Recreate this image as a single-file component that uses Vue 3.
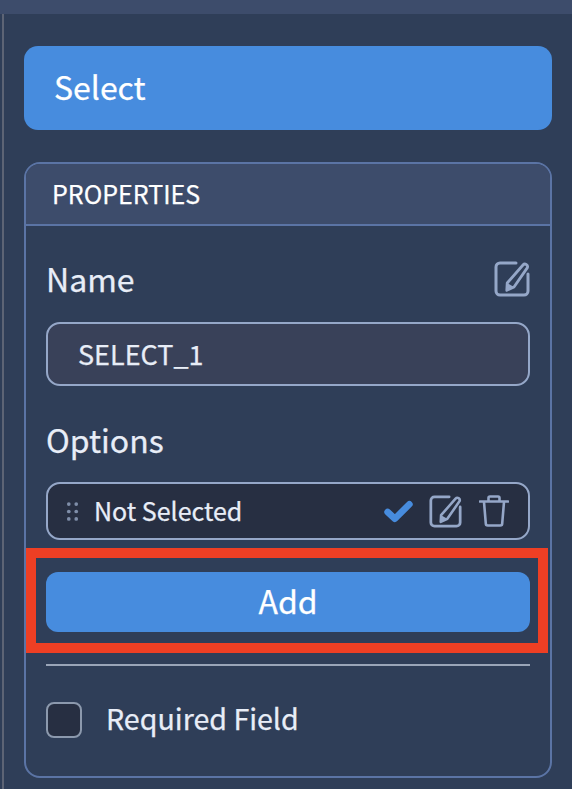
<script setup>
const fieldName = 'SELECT_1'
</script>

<template>
  <div class="page">
    <div class="topbar"></div>
    <div class="body">
      <aside class="rail"></aside>
      <main class="content">
        <div class="banner">Select</div>
        <section class="panel">
          <header class="panel-head">PROPERTIES</header>
          <div class="panel-body">
            <div class="name-row">
              <span class="label">Name</span>
              <svg class="edit edit-lg" viewBox="0 0 36 36" fill="none">
                <path d="M22 2H6a4 4 0 0 0-4 4v24a4 4 0 0 0 4 4h24a4 4 0 0 0 4-4V13" stroke="currentColor" stroke-width="3" stroke-linecap="round"/>
                <path d="M29 4a2.600 2.600 0 0 1 4.400 2.600L20 26l-7.200 3.300.4-7.300z" stroke="currentColor" stroke-width="2.800" stroke-linejoin="round"/>
                <path d="M13.200 22l6.800 4-7.200 3.300z" fill="currentColor"/>
              </svg>
            </div>
            <div class="input">{{ fieldName }}</div>
            <div class="label options-label">Options</div>
            <div class="option">
              <svg class="grip" viewBox="0 0 14 22" fill="currentColor">
                <circle cx="3" cy="3" r="2"/><circle cx="11" cy="3" r="2"/>
                <circle cx="3" cy="11" r="2"/><circle cx="11" cy="11" r="2"/>
                <circle cx="3" cy="19" r="2"/><circle cx="11" cy="19" r="2"/>
              </svg>
              <span class="option-text">Not Selected</span>
              <svg class="check" viewBox="0 0 28 22" fill="none">
                <path d="M3.500 11.500l7 6.500L24.500 4" stroke="currentColor" stroke-width="6.400" stroke-linecap="round" stroke-linejoin="round"/>
              </svg>
              <svg class="edit edit-sm" viewBox="0 0 36 36" fill="none">
                <path d="M22 2H6a4 4 0 0 0-4 4v24a4 4 0 0 0 4 4h24a4 4 0 0 0 4-4V13" stroke="currentColor" stroke-width="3" stroke-linecap="round"/>
                <path d="M29 4a2.600 2.600 0 0 1 4.400 2.600L20 26l-7.200 3.300.4-7.300z" stroke="currentColor" stroke-width="2.800" stroke-linejoin="round"/>
                <path d="M13.200 22l6.800 4-7.200 3.300z" fill="currentColor"/>
              </svg>
              <svg class="trash" viewBox="0 0 30 32" fill="none" stroke="currentColor" stroke-width="2.600">
                <path d="M1 6.500h28" stroke-linecap="round"/>
                <path d="M9.500 6V3a1.500 1.500 0 0 1 1.500-1.500h8A1.500 1.500 0 0 1 20.500 3v3"/>
                <path d="M5 7l1.800 21.500A2 2 0 0 0 8.800 30.500h12.400a2 2 0 0 0 2-2L25 7"/>
              </svg>
            </div>
            <div class="add-wrap">
              <button class="add" type="button">Add</button>
              <div class="highlight"></div>
            </div>
            <hr class="divider" />
            <label class="required">
              <span class="box"></span>
              <span class="required-text">Required Field</span>
            </label>
          </div>
        </section>
      </main>
    </div>
  </div>
</template>

<style>
html, body { margin: 0; background: #2f3e58; }
</style>

<style scoped>
.page {
  width: 572px;
  height: 789px;
  overflow: hidden;
  background: #2f3e58;
  font-family: "Noto Sans CJK SC", "Noto Sans", sans-serif;
  color: #e8edf7;
  display: flex;
  flex-direction: column;
  -webkit-text-stroke: 0.25px currentColor;
}
.topbar { height: 14px; background: #3d4c6b; flex: none; }
.body { flex: 1; display: flex; min-height: 0; }
.rail { width: 2px; margin-left: 2px; background: #5d6475; flex: none; }
.content { flex: 1; padding: 32px 20px 0 20px; min-width: 0; }
.banner {
  height: 84px;
  box-sizing: border-box;
  padding: 0 0 4px 30px;
  display: flex;
  align-items: center;
  background: #478cde;
  border-radius: 14px;
  color: #fff;
  font-size: 32px;
}
.panel {
  margin-top: 32px;
  height: 616px;
  box-sizing: border-box;
  border: 2px solid #5b74a5;
  border-radius: 16px;
}
.panel-head {
  height: 62px;
  box-sizing: border-box;
  padding: 0 0 2px 26px;
  display: flex;
  align-items: center;
  background: #3d4c6b;
  border-bottom: 2px solid #5b74a5;
  border-radius: 14px 14px 0 0;
  color: #fff;
  font-size: 25px;
}
.panel-body { padding: 0 20px; }
.label { font-size: 32px; line-height: 40px; color: #e8edf7; }
.name-row {
  height: 96px;
  box-sizing: border-box;
  padding-top: 32px;
  display: flex;
  justify-content: space-between;
  align-items: flex-start;
}
.edit { color: #95a7c8; flex: none; }
.edit-lg { width: 36px; height: 36px; margin-top: 3px; }
.input {
  height: 64px;
  box-sizing: border-box;
  padding: 0 0 2px 30px;
  display: flex;
  align-items: center;
  background: #394159;
  border: 2px solid #95a7c8;
  border-radius: 14px;
  font-size: 27px;
  color: #e8edf7;
}
.options-label { margin-top: 33px; }
.option {
  margin-top: 23px;
  height: 58px;
  box-sizing: border-box;
  padding: 0 19px 0 18px;
  display: flex;
  align-items: center;
  background: #272f42;
  border: 2px solid #95a7c8;
  border-radius: 14px;
}
.grip { width: 13px; height: 21px; color: #7f8ea9; flex: none; }
.option-text { margin: -3px 0 0 15px; flex: 1; font-size: 25px; color: #e8edf7; }
.check { width: 29px; height: 23px; color: #478cde; flex: none; }
.edit-sm { width: 33px; height: 33px; margin-left: 16px; }
.trash { width: 30px; height: 32px; margin-left: 17px; color: #95a7c8; flex: none; }
.add-wrap { position: relative; margin-top: 32px; }
.add {
  display: block;
  width: 100%;
  height: 60px;
  border: 0;
  padding: 0 0 4px;
  background: #478cde;
  border-radius: 12px;
  color: #fff;
  font-family: inherit;
  font-size: 32px;
  -webkit-text-stroke: 0.25px currentColor;
}
.highlight {
  position: absolute;
  left: -20px;
  top: -24px;
  width: 522px;
  height: 105px;
  box-sizing: border-box;
  border: 10px solid #ee3f24;
}
.divider {
  margin: 32px 0 0;
  height: 2px;
  border: 0;
  background: #9aa5b8;
}
.required {
  margin-top: 36px;
  display: flex;
  align-items: center;
  font-size: 28.6px;
  color: #e8edf7;
}
.required-text { margin-top: -6px; }
.box {
  width: 36px;
  height: 36px;
  box-sizing: border-box;
  background: #272f42;
  border: 2px solid #8c99ad;
  border-radius: 8px;
  margin-right: 24px;
  flex: none;
}
</style>
